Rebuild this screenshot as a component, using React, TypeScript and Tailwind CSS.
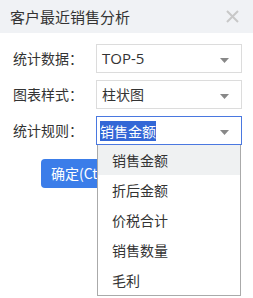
import React from "react";

const font = { fontFamily: '"Noto Sans CJK SC", "Liberation Sans", sans-serif' };

const options = ["销售金额", "折后金额", "价税合计", "销售数量", "毛利"];

const Arrow = () => (
  <svg width="9" height="5" viewBox="0 0 9 5" className="absolute right-[12px] top-[13px]">
    <path d="M0 0 H9 L4.5 5 Z" fill="#888" />
  </svg>
);

const App = () => {
  return (
    <div className="w-[253px] h-[298px] overflow-hidden bg-white relative text-[#333]" style={font}>
      <div className="h-[33px] bg-[#f0f2f5] flex items-center justify-between pl-[10px] pr-[14px]">
        <span className="text-[15px] leading-none">客户最近销售分析</span>
        <svg width="13" height="13" viewBox="0 0 13 13">
          <path d="M1 1 L12 12 M12 1 L1 12" stroke="#c8c8c8" strokeWidth="2" />
        </svg>
      </div>

      <div className="pt-[11px] flex flex-col gap-[7px]">
        <div className="flex items-center">
          <span className="w-[96px] pl-[13px] text-[14px]">统计数据：</span>
          <div className="relative w-[146px] h-[29px] border border-[#dcdcdc] flex items-center pl-[5px] text-[15px]" style={{ fontFamily: '"Open Sans", "Noto Sans CJK SC", sans-serif' }}>
            TOP-5
            <Arrow />
          </div>
        </div>
        <div className="flex items-center">
          <span className="w-[96px] pl-[13px] text-[14px]">图表样式：</span>
          <div className="relative w-[146px] h-[29px] border border-[#dcdcdc] flex items-center pl-[5px] text-[14px]">
            柱状图
            <Arrow />
          </div>
        </div>
        <div className="flex items-center">
          <span className="w-[96px] pl-[13px] text-[14px]">统计规则：</span>
          <div className="relative w-[146px] h-[29px] border border-[#4a78e0] flex items-center pl-[3px] text-[14px]">
            <span className="bg-[#3367d6] text-white leading-[20px]">销售金额</span>
            <Arrow />
            <div className="absolute top-[28px] left-0 w-[144px] bg-white border border-[#aaa] border-t-0 z-10">
              {options.map((o, i) => (
                <div
                  key={o}
                  className={`h-[30px] flex items-center pl-[14px] text-[14px] ${i === 0 ? "bg-[#eff1f2]" : ""}`}
                >
                  {o}
                </div>
              ))}
            </div>
          </div>
        </div>
      </div>

      <div className="mt-[14px] ml-[41px]">
        <button className="h-[29px] px-[10px] rounded-[4px] bg-[#3b7de9] text-white text-[14px] whitespace-nowrap">
          确定(Ctrl+Enter)
        </button>
      </div>
    </div>
  );
};

export default App;
